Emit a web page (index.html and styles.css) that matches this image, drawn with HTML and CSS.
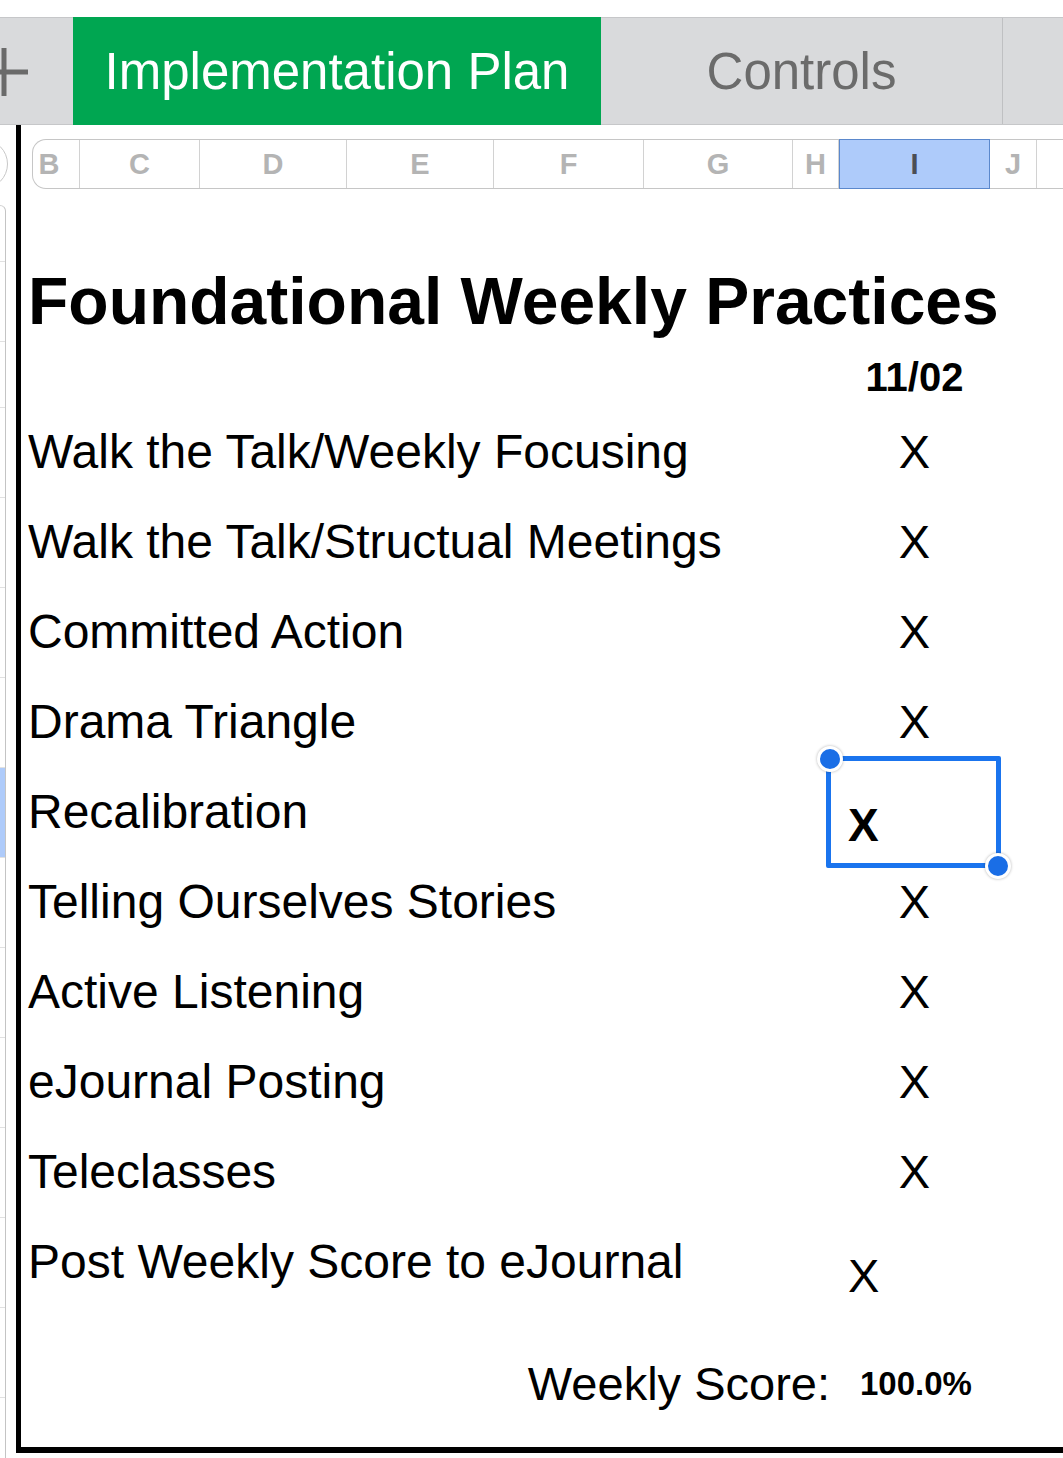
FILE: index.html
```html
<!DOCTYPE html>
<html lang="en">

<head>
  <meta charset="UTF-8">
  <meta name="viewport" content="width=device-width, initial-scale=1.0">
  <title>Implementation Plan</title>
  <link rel="stylesheet" href="styles.css">
</head>

<body>
  <!-- Sheet tabs -->
  <div class="tabs">
    <div class="tab tab-add">
      <svg width="73" height="106" viewBox="0 0 73 106">
        <line x1="-20" y1="54" x2="28" y2="54" stroke="#6a6a6a" stroke-width="5" />
        <line x1="4" y1="30" x2="4" y2="78" stroke="#6a6a6a" stroke-width="5" />
      </svg>
    </div>
    <div class="tab tab-active">Implementation Plan</div>
    <div class="tab tab-controls">Controls</div>
    <div class="tab tab-more"></div>
  </div>

  <div class="sheet">
    <!-- Row headers (mostly scrolled off) -->
    <div class="rowhead">
      <div class="corner"></div>
      <div class="strip">
        <div class="strip-cell" style="height: 56px"></div>
        <div class="strip-cell" style="height: 80px"></div>
        <div class="strip-cell" style="height: 66px"></div>
        <div class="strip-cell"></div>
        <div class="strip-cell"></div>
        <div class="strip-cell"></div>
        <div class="strip-cell"></div>
        <div class="strip-cell selected"></div>
        <div class="strip-cell"></div>
        <div class="strip-cell"></div>
        <div class="strip-cell"></div>
        <div class="strip-cell"></div>
        <div class="strip-cell"></div>
        <div class="strip-cell"></div>
        <div class="strip-cell"></div>
      </div>
    </div>

    <div class="grid">
      <!-- Column headers -->
      <div class="colhead">
        <div class="col col-b">B</div>
        <div class="col col-c">C</div>
        <div class="col col-d">D</div>
        <div class="col col-e">E</div>
        <div class="col col-f">F</div>
        <div class="col col-g">G</div>
        <div class="col col-h">H</div>
        <div class="col col-i">I</div>
        <div class="col col-j">J</div>
        <div class="col col-k"></div>
      </div>

      <div class="content">
        <h1 class="title">Foundational Weekly Practices</h1>

        <div class="row row-date">
          <span></span>
          <span class="mark date">11/02</span>
        </div>

        <div class="row">
          <span class="label">Walk the Talk/Weekly Focusing</span>
          <span class="mark">X</span>
        </div>
        <div class="row">
          <span class="label">Walk the Talk/Structual Meetings</span>
          <span class="mark">X</span>
        </div>
        <div class="row">
          <span class="label">Committed Action</span>
          <span class="mark">X</span>
        </div>
        <div class="row">
          <span class="label">Drama Triangle</span>
          <span class="mark">X</span>
        </div>
        <div class="row">
          <span class="label">Recalibration</span>
          <span class="mark mark-low mark-bold">X</span>
          <!-- selected cell -->
          <div class="selection">
            <span class="handle handle-tl"></span>
            <span class="handle handle-br"></span>
          </div>
        </div>
        <div class="row">
          <span class="label">Telling Ourselves Stories</span>
          <span class="mark">X</span>
        </div>
        <div class="row">
          <span class="label">Active Listening</span>
          <span class="mark">X</span>
        </div>
        <div class="row">
          <span class="label">eJournal Posting</span>
          <span class="mark">X</span>
        </div>
        <div class="row">
          <span class="label">Teleclasses</span>
          <span class="mark">X</span>
        </div>
        <div class="row">
          <span class="label">Post Weekly Score to eJournal</span>
          <span class="mark mark-low">X</span>
        </div>

        <div class="score">
          <span class="score-label">Weekly Score:</span>
          <span class="score-value">100.0%</span>
        </div>
      </div>
    </div>
  </div>
</body>

</html>
```

FILE: styles.css
```css
body {
  margin: 0;
  padding-top: 17px;
  font-family: "Liberation Sans", Arial, sans-serif;
  background: #fff;
  color: #000;
  overflow: hidden;
}

/* ---- sheet tabs ---- */

.tabs {
  display: flex;
  height: 108px;
  box-sizing: border-box;
  background: #d9dadc;
  border-top: 1px solid #c6c7c9;
  border-bottom: 1px solid #c6c7c9;
}

.tab {
  display: flex;
  align-items: center;
  justify-content: center;
  font-size: 51px;
  color: #6b6b6b;
  overflow: hidden;
}

.tab-add {
  width: 73px;
  justify-content: flex-start;
}

.tab-active {
  width: 528px;
  margin: -1px 0;
  background: #00a651;
  color: #fff;
}

.tab-controls {
  width: 401px;
  border-right: 1px solid #bfc0c2;
}

.tab-more {
  flex: 1;
}

/* ---- sheet body ---- */

.sheet {
  display: flex;
  align-items: flex-start;
}

.rowhead {
  width: 16px;
  height: 1333px;
  overflow: hidden;
}

.corner {
  width: 48px;
  height: 48px;
  margin-top: 14px;
  margin-left: -42px;
  border: 1px solid #c8c8c8;
  border-radius: 50%;
}

.strip {
  width: 14px;
  margin-top: 16px;
  margin-left: -9px;
  border-top: 1px solid #d2d2d2;
  border-right: 1px solid #c4c4c4;
  border-top-right-radius: 6px;
}

.strip-cell {
  height: 90px;
  box-sizing: border-box;
  border-bottom: 1px solid #e1e1e1;
}

.strip-cell.selected {
  background: #aecbfa;
}

.grid {
  flex: 1;
  border-left: 5px solid #000;
  border-bottom: 6px solid #000;
}

/* ---- column headers ---- */

.colhead {
  display: flex;
  height: 50px;
  box-sizing: border-box;
  margin-top: 14px;
  margin-left: 11px;
  border: 1px solid #c6c6c6;
  border-right: none;
  border-radius: 14px 0 0 14px;
  font-size: 29px;
  font-weight: bold;
  color: #b4b4b4;
}

.col {
  display: flex;
  align-items: center;
  justify-content: center;
  box-sizing: border-box;
  border-right: 1px solid #d2d2d2;
}

.col-b { width: 47px; padding-right: 14px; }
.col-c { width: 120px; }
.col-d { width: 147px; }
.col-e { width: 147px; }
.col-f { width: 150px; }
.col-g { width: 149px; }
.col-h { width: 46px; }
.col-j { width: 47px; }
.col-k { flex: 1; border-right: none; }

.col-i {
  width: 151px;
  margin: -1px 0;
  background: #aecbfa;
  border: 1px solid #5b88cc;
  color: #4b4e54;
}

/* ---- cells ---- */

.title {
  margin: 72px 0 0;
  padding-left: 7px;
  font-size: 66px;
  line-height: 80px;
  font-weight: bold;
  white-space: nowrap;
}

.row {
  position: relative;
  display: grid;
  grid-template-columns: 818px 151px 1fr;
  grid-template-rows: 90px;
  font-size: 48px;
  line-height: 90px;
}

.label {
  padding-left: 7px;
  white-space: nowrap;
}

.mark {
  text-align: center;
  font-size: 47px;
}

.mark-low {
  text-align: left;
  padding-left: 9px;
  padding-top: 14px;
}

.mark-bold {
  font-weight: bold;
  font-size: 46px;
  padding-top: 13px;
}

.row-date {
  grid-template-rows: auto;
  padding: 12px 0 6px;
  line-height: 48px;
}

.date {
  font-size: 40px;
  font-weight: bold;
}

/* selected cell outline */
.selection {
  position: absolute;
  left: 805px;
  top: -11px;
  width: 175px;
  height: 112px;
  box-sizing: border-box;
  border: 5px solid #1a74ee;
  border-radius: 2px;
}

.handle {
  position: absolute;
  width: 20px;
  height: 20px;
  border: 3px solid #fff;
  border-radius: 50%;
  background: #1a6ee6;
  box-shadow: 0 0 3px rgba(0, 0, 0, 0.3);
}

.handle-tl {
  left: -14px;
  top: -15px;
}

.handle-br {
  left: 154px;
  top: 92px;
}

/* ---- score ---- */

.score {
  display: grid;
  grid-template-columns: 818px 151px 1fr;
  align-items: start;
  height: 140px;
  box-sizing: border-box;
  padding-top: 47px;
  line-height: 60px;
}

.score-label {
  text-align: right;
  padding-right: 9px;
  font-size: 47px;
}

.score-value {
  padding-left: 21px;
  font-size: 33px;
  font-weight: bold;
}
```
